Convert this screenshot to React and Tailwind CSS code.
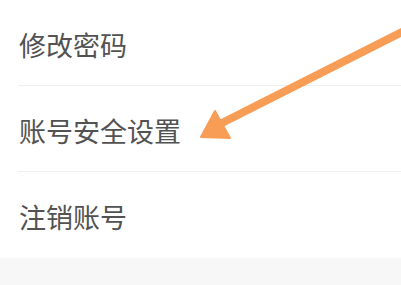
import React from 'react';

const items = ['修改密码', '账号安全设置', '注销账号'];

const App = () => {
  return (
    <div className="relative w-[401px] h-[285px] bg-[#f7f7f7] overflow-hidden" style={{ fontFamily: '"Noto Sans CJK SC", "Noto Sans", sans-serif' }}>
      <div className="bg-white pl-[18px]">
        {items.map((label, i) => (
          <div
            key={label}
            className={`h-[86px] flex items-center pl-[1px] pt-[5px] text-[27px] text-[#525252] ${i < items.length - 1 ? 'border-b border-[#efefef]' : ''}`}
          >
            {label}
          </div>
        ))}
      </div>

      {/* annotation arrow */}
      <svg className="absolute left-0 top-0" width="401" height="285" viewBox="0 0 401 285">
        <line x1="220" y1="124" x2="410" y2="28" stroke="#f89d55" strokeWidth="8" strokeLinecap="round" />
        <polygon points="201,137 215,111 230,138" fill="#f89d55" stroke="#f89d55" strokeWidth="2" strokeLinejoin="round" />
      </svg>
    </div>
  );
};

export default App;
